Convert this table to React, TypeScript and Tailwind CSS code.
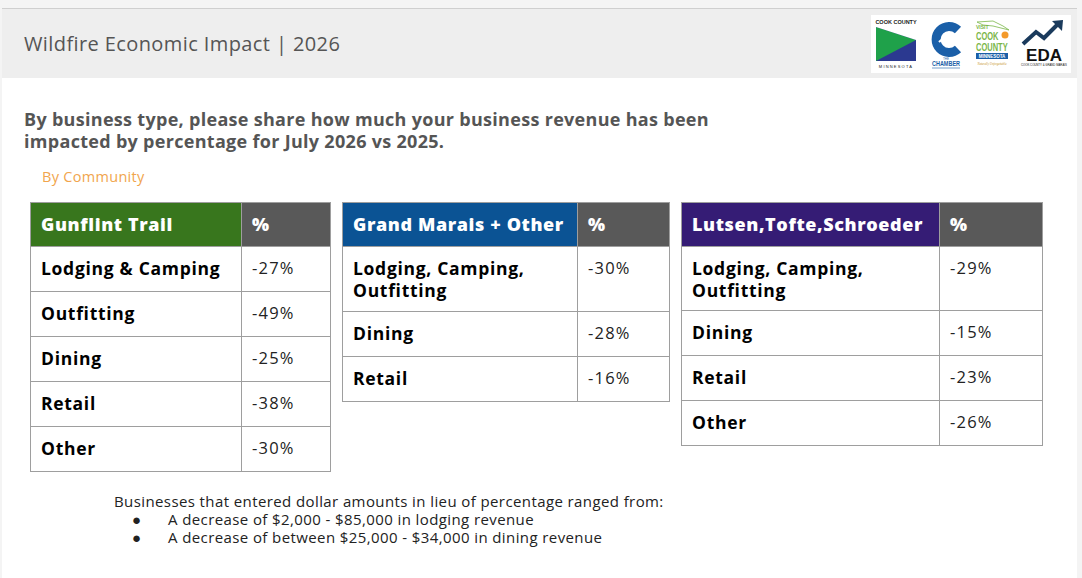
import React from 'react';

interface Row {
  label: string;
  value: string;
  h: string;
}

interface Region {
  name: string;
  color: string;
  width: string;
  col1: string;
  col2: string;
  rows: Row[];
}

const regions: Region[] = [
  {
    name: 'Gunflint Trail',
    color: 'bg-[#38761d]',
    width: 'w-[300px]',
    col1: 'w-[211px]',
    col2: 'w-[89px]',
    rows: [
      { label: 'Lodging & Camping', value: '-27%', h: 'h-[45px]' },
      { label: 'Outfitting', value: '-49%', h: 'h-[45px]' },
      { label: 'Dining', value: '-25%', h: 'h-[45px]' },
      { label: 'Retail', value: '-38%', h: 'h-[45px]' },
      { label: 'Other', value: '-30%', h: 'h-[45px]' },
    ],
  },
  {
    name: 'Grand Marais + Other',
    color: 'bg-[#0b5394]',
    width: 'w-[327px]',
    col1: 'w-[235px]',
    col2: 'w-[92px]',
    rows: [
      { label: 'Lodging, Camping, Outfitting', value: '-30%', h: 'h-[65px]' },
      { label: 'Dining', value: '-28%', h: 'h-[45px]' },
      { label: 'Retail', value: '-16%', h: 'h-[45px]' },
    ],
  },
  {
    name: 'Lutsen,Tofte,Schroeder',
    color: 'bg-[#351c75]',
    width: 'w-[361px]',
    col1: 'w-[258px]',
    col2: 'w-[103px]',
    rows: [
      { label: 'Lodging, Camping, Outfitting', value: '-29%', h: 'h-[64px]' },
      { label: 'Dining', value: '-15%', h: 'h-[45px]' },
      { label: 'Retail', value: '-23%', h: 'h-[45px]' },
      { label: 'Other', value: '-26%', h: 'h-[45px]' },
    ],
  },
];

function RegionTable({ region }: { region: Region }) {
  return (
    <table className={`${region.width} table-fixed border-collapse`}>
      <thead>
        <tr className="h-[44px]">
          <th className={`${region.col1} ${region.color} border border-[#9e9e9e] px-[10px] text-left text-[18px] font-extrabold tracking-[0.6px] text-white`}>
            {region.name}
          </th>
          <th className={`${region.col2} bg-[#595959] border border-[#9e9e9e] px-[10px] text-left text-[18px] font-extrabold text-white`}>
            %
          </th>
        </tr>
      </thead>
      <tbody>
        {region.rows.map((row) => (
          <tr key={row.label} className={row.h}>
            <td className="border border-[#9e9e9e] px-[10px] pt-[10px] align-top text-[17.5px] font-bold leading-[22px] tracking-[0.7px] text-black">
              {row.label}
            </td>
            <td className="border border-[#9e9e9e] px-[10px] pt-[10px] align-top text-[16.5px] leading-[22px] tracking-[1.2px] text-[#222]">
              {row.value}
            </td>
          </tr>
        ))}
      </tbody>
    </table>
  );
}

function Logos() {
  return (
    <div className="flex h-[58px] w-[200px] items-center justify-between bg-white px-[3px]">
      {/* Cook County */}
      <svg width="44" height="52" viewBox="0 0 44 52">
        <text x="22" y="6" textAnchor="middle" fontSize="5.5" fontWeight="700" fill="#222" fontFamily="Liberation Sans, sans-serif">COOK COUNTY</text>
        <rect x="2" y="9" width="40" height="34" fill="#2b3990" />
        <polygon points="2,9 42,22 2,43" fill="#1fa14a" />
        <polygon points="2,9 42,9 42,22" fill="#fff" />
        <text x="22" y="50" textAnchor="middle" fontSize="4" letterSpacing="1.2" fill="#222" fontFamily="Liberation Sans, sans-serif">MINNESOTA</text>
      </svg>
      {/* Chamber */}
      <svg width="38" height="52" viewBox="0 0 38 52">
        <path d="M31 12 A13 13 0 1 0 31 31" fill="none" stroke="#1a5fa8" strokeWidth="9" />
        <path d="M12 24 Q21 15 33 22" fill="none" stroke="#fff" strokeWidth="2" />
        <text x="19" y="42" textAnchor="middle" fontSize="3" fill="#1a5fa8" fontFamily="Liberation Sans, sans-serif">THE</text>
        <text x="5" y="48" textLength="28" lengthAdjust="spacingAndGlyphs" fontSize="6.5" fontWeight="700" fill="#1a5fa8" fontFamily="Liberation Sans, sans-serif">CHAMBER</text>
        <line x1="5" y1="50" x2="33" y2="50" stroke="#1a5fa8" strokeWidth="0.6" />
      </svg>
      {/* Visit Cook County */}
      <svg width="38" height="52" viewBox="0 0 38 52">
        <path d="M4 4 L20 3 L30 8 L36 12 L28 10 L20 8 L10 7 Z" fill="none" stroke="#7ab648" strokeWidth="0.8" />
        <circle cx="32" cy="17" r="3.5" fill="#f39a2b" />
        <text x="3" y="11" fontSize="5" fontWeight="700" fill="#7ab648" fontFamily="Liberation Sans, sans-serif">VISIT</text>
        <text transform="translate(3,22) scale(1,1.45)" fontSize="7.5" fontWeight="700" fill="#7ab648" fontFamily="Liberation Sans, sans-serif">COOK</text>
        <text transform="translate(3,33) scale(1,1.45)" fontSize="7.5" fontWeight="700" fill="#7ab648" fontFamily="Liberation Sans, sans-serif">COUNTY</text>
        <rect x="3" y="35" width="32" height="6" fill="#1a5fa8" />
        <text x="19" y="40" textAnchor="middle" fontSize="4.5" fontWeight="700" fill="#fff" fontFamily="Liberation Sans, sans-serif">MINNESOTA</text>
        <text x="19" y="47" textAnchor="middle" fontSize="3" fontStyle="italic" fill="#c8962b" fontFamily="Liberation Serif, serif">Naturally Unforgettable</text>
      </svg>
      {/* EDA */}
      <svg width="48" height="52" viewBox="0 0 48 52">
        <path d="M3 26 L16 14 L24 20 L38 6" fill="none" stroke="#1a3a5c" strokeWidth="4" />
        <polygon points="32,3 43,2 42,13" fill="#1a3a5c" />
        <text x="24" y="43" textAnchor="middle" fontSize="17" fontWeight="700" fill="#111" fontFamily="Liberation Sans, sans-serif">EDA</text>
        <text x="24" y="48" textAnchor="middle" fontSize="2.8" fill="#111" fontFamily="Liberation Sans, sans-serif">COOK COUNTY &amp; GRAND MARAIS</text>
      </svg>
    </div>
  );
}

export default function App() {
  return (
    <div className="flex h-[578px] w-[1082px] bg-[#f4f4f4] font-['Open_Sans',sans-serif]">
      <div className="ml-[2px] mt-[8px] flex w-[1075px] flex-col border-t border-[#cfcfcf] bg-white">
        {/* Header band */}
        <div className="flex h-[69px] items-center justify-between bg-[#eeeeee] pl-[22px] pr-[6px]">
          <h1 className="text-[20px] font-normal tracking-[0.4px] text-[#555]">Wildfire Economic Impact | 2026</h1>
          <Logos />
        </div>

        {/* Question */}
        <div className="pl-[22px] pt-[30px]">
          <p className="text-[18px] font-bold leading-[22px] tracking-[0.3px] text-[#555]">
            By business type, please share how much your business revenue has been
            <br />
            impacted by percentage for July 2026 vs 2025.
          </p>
          <p className="mt-[14px] pl-[18px] text-[14.5px] tracking-[0.3px] text-[#f1a54d]">By Community</p>
        </div>

        {/* Tables */}
        <div className="mt-[14px] flex items-start gap-[11px] pl-[28px]">
          {regions.map((r) => (
            <RegionTable key={r.name} region={r} />
          ))}
        </div>

        {/* Footnote */}
        <div className="mt-[20px] pl-[112px] text-[15px] leading-[18px] tracking-[0.4px] text-[#222]">
          <p>Businesses that entered dollar amounts in lieu of percentage ranged from:</p>
          <ul>
            <li className="flex">
              <span className="w-[54px] pl-[18px]">●</span>
              <span>A decrease of $2,000 - $85,000 in lodging revenue</span>
            </li>
            <li className="flex">
              <span className="w-[54px] pl-[18px]">●</span>
              <span>A decrease of between $25,000 - $34,000 in dining revenue</span>
            </li>
          </ul>
        </div>
      </div>
    </div>
  );
}
